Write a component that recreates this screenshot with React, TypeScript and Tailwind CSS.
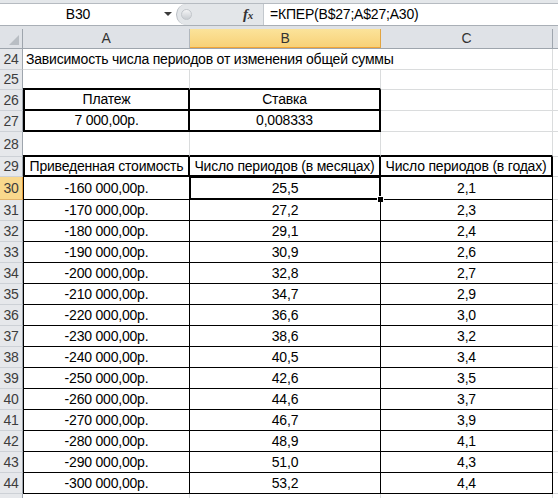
import React from 'react';

const font = "font-['Liberation_Sans',Arial,sans-serif]";

const rows = [
  ['-160 000,00р.', '25,5', '2,1'],
  ['-170 000,00р.', '27,2', '2,3'],
  ['-180 000,00р.', '29,1', '2,4'],
  ['-190 000,00р.', '30,9', '2,6'],
  ['-200 000,00р.', '32,8', '2,7'],
  ['-210 000,00р.', '34,7', '2,9'],
  ['-220 000,00р.', '36,6', '3,0'],
  ['-230 000,00р.', '38,6', '3,2'],
  ['-240 000,00р.', '40,5', '3,4'],
  ['-250 000,00р.', '42,6', '3,5'],
  ['-260 000,00р.', '44,6', '3,7'],
  ['-270 000,00р.', '46,7', '3,9'],
  ['-280 000,00р.', '48,9', '4,1'],
  ['-290 000,00р.', '51,0', '4,3'],
  ['-300 000,00р.', '53,2', '4,4'],
];

function RowLabel({ n, active }: { n?: number; active?: boolean }) {
  return (
    <div
      className={
        active
          ? 'w-[23px] shrink-0 flex items-center justify-center border-r border-b border-r-[#e29b3c] border-b-[#e2b36a] bg-[#f9d88c] text-[#3d3d3d]'
          : 'w-[23px] shrink-0 flex items-center justify-center border-r border-b border-r-[#9ea5ad] border-b-[#cdd1d6] bg-[#e6e8eb] text-[#3d3d3d]'
      }
    >
      {n}
    </div>
  );
}

function FormulaBar() {
  return (
    <div className="h-[29px] bg-[#dfe2e6] flex flex-col">
      <div className="h-[4px] bg-[#e4e7ea] border-b border-[#b6bbc1]" />
      <div className="h-[22px] flex bg-white border-b border-[#a9afb6]">
        <div className="w-[176px] flex items-center relative">
          <span className="flex-1 text-center pr-[20px]">B30</span>
          <span className="absolute left-[164px] top-[8px] w-0 h-0 border-l-[4px] border-r-[4px] border-t-[4px] border-l-transparent border-r-transparent border-t-[#3b3b3b]" />
        </div>
        <div className="w-[87px] flex items-center bg-[#e3e6e9] rounded-l-[11px] border-l border-[#b9bec4]">
          <span className="ml-[4px] w-[11px] h-[11px] rounded-full bg-gradient-to-b from-[#f4f5f6] to-[#c9cdd2] border border-[#c2c6cb]" />
          <span className="ml-auto mr-[10px] font-['Liberation_Serif',serif] italic font-bold text-[15px] text-[#333]">
            f<span className="text-[11px]">x</span>
          </span>
        </div>
        <div className="flex-1 flex items-center pl-[6px] border-l border-[#c3c8cd]">=КПЕР(B$27;A$27;A30)</div>
      </div>
    </div>
  );
}

function HeaderRow() {
  return (
    <div className="h-[20px] flex bg-[#dfe2e7] border-b border-[#9ea5ad] text-[#333]">
      <div className="w-[23px] relative border-r border-[#9ea5ad]">
        <svg className="absolute right-[3px] bottom-[3px]" width="10" height="10" viewBox="0 0 10 10">
          <polygon points="10,0 10,10 0,10" fill="#b9bec4" />
        </svg>
      </div>
      <div className="w-[167px] flex items-center justify-center border-r border-[#b1b7be]">A</div>
      <div className="w-[191px] flex items-center justify-center border-r border-[#e2a441] bg-gradient-to-b from-[#fbe39a] to-[#f8d177] border-b border-b-[#f0a437]">B</div>
      <div className="w-[172px] flex items-center justify-center border-r border-[#9ea5ad]">C</div>
      <div className="flex-1" />
    </div>
  );
}

export default function App() {
  return (
    <div className={`w-[558px] h-[498px] overflow-hidden bg-white text-[14px] tracking-[-0.2px] text-black ${font}`}>
      <FormulaBar />
      <HeaderRow />

      {/* 24 */}
      <div className="h-[21px] flex">
        <RowLabel n={24} />
        <div className="w-[530px] flex items-center pl-[3px] whitespace-nowrap border-r border-b border-[#dadcdd]">
          Зависимость числа периодов от изменения общей суммы
        </div>
        <div className="flex-1 border-b border-[#dadcdd]" />
      </div>

      {/* 25 */}
      <div className="h-[20px] flex">
        <RowLabel n={25} />
        <div className="w-[167px] border-r border-r-[#dadcdd] border-b-2 border-b-black" />
        <div className="w-[191px] border-r border-r-[#dadcdd] border-b-2 border-b-black" />
        <div className="w-[172px] border-r border-b border-[#dadcdd]" />
        <div className="flex-1 border-b border-[#dadcdd]" />
      </div>

      {/* 26 */}
      <div className="h-[21px] flex">
        <RowLabel n={26} />
        <div className="w-[167px] flex items-center justify-center border-l-2 border-r-2 border-b-2 border-black">Платеж</div>
        <div className="w-[191px] flex items-center justify-center border-r-2 border-b-2 border-black">Ставка</div>
        <div className="w-[172px] border-r border-b border-[#dadcdd]" />
        <div className="flex-1 border-b border-[#dadcdd]" />
      </div>

      {/* 27 */}
      <div className="h-[21px] flex">
        <RowLabel n={27} />
        <div className="w-[167px] flex items-center justify-center border-l-2 border-r-2 border-b-2 border-black">7 000,00р.</div>
        <div className="w-[191px] flex items-center justify-center border-r-2 border-b-2 border-black">0,008333</div>
        <div className="w-[172px] border-r border-b border-[#dadcdd]" />
        <div className="flex-1 border-b border-[#dadcdd]" />
      </div>

      {/* 28 */}
      <div className="h-[25px] flex">
        <RowLabel n={28} />
        <div className="w-[167px] border-r border-r-[#dadcdd] border-b-2 border-b-black" />
        <div className="w-[191px] border-r border-r-[#dadcdd] border-b-2 border-b-black" />
        <div className="w-[172px] border-r border-r-[#dadcdd] border-b-2 border-b-black" />
        <div className="flex-1 border-b border-[#dadcdd]" />
      </div>

      {/* 29 */}
      <div className="h-[20px] flex">
        <RowLabel n={29} />
        <div className="w-[167px] flex items-center justify-center whitespace-nowrap border-l-2 border-r-2 border-b-2 border-black">Приведенная стоимость</div>
        <div className="w-[191px] flex items-center justify-center whitespace-nowrap border-r-2 border-b-2 border-black">Число периодов (в месяцах)</div>
        <div className="w-[172px] flex items-center justify-center whitespace-nowrap border-r-2 border-b-2 border-black">Число периодов (в годах)</div>
        <div className="flex-1 border-b border-[#dadcdd]" />
      </div>

      {rows.map(([a, b, c], i) => (
        <div key={i} className={i === 0 ? 'h-[23px] flex' : 'h-[21px] flex'}>
          <RowLabel n={30 + i} active={i === 0} />
          <div className="w-[167px] flex items-center justify-center border-l border-r border-b border-black">{a}</div>
          <div className="w-[191px] flex items-center justify-center border-r border-b border-black relative">
            {b}
            {i === 0 && (
              <>
                <div className="absolute left-[-1px] top-[-1px] right-[-1px] bottom-[-1px] border-2 border-black" />
                <div className="absolute right-[-4px] bottom-[-4px] w-[7px] h-[7px] bg-black border border-white" />
              </>
            )}
          </div>
          <div className="w-[172px] flex items-center justify-center border-r border-b border-black">{c}</div>
          <div className="flex-1 border-b border-[#dadcdd]" />
        </div>
      ))}

      {/* sliver of the next row */}
      <div className="h-[10px] flex">
        <RowLabel />
        <div className="w-[167px] border-r border-[#dadcdd]" />
        <div className="w-[191px] border-r border-[#dadcdd]" />
        <div className="w-[172px] border-r border-[#dadcdd]" />
      </div>
    </div>
  );
}
